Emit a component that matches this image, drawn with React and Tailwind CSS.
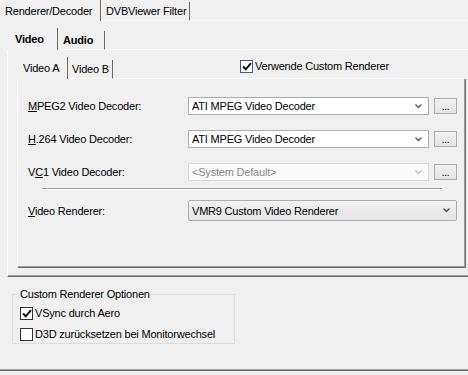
import React from "react";

// Windows-Dialog: Renderer/Decoder Einstellungen

const DARK = "border-r-[#696969]";

function Chevron({ disabled = false }) {
  return (
    <svg width="7" height="5" viewBox="0 0 7 5" className="shrink-0">
      <path
        d="M0.5 0.5 L3.5 3.5 L6.5 0.5"
        fill="none"
        stroke={disabled ? "#c4c4c4" : "#5a5a5a"}
        strokeWidth="1.4"
      />
    </svg>
  );
}

function Check({ checked, focus = false }) {
  return (
    <span
      className={`flex h-[13px] w-[13px] shrink-0 items-center justify-center border bg-white ${
        focus ? "border-[#3d5a8c]" : "border-[#333333]"
      }`}
    >
      {checked && (
        <svg width="10" height="9" viewBox="0 0 10 9">
          <path d="M1 4.5 L3.8 7.3 L9 1.2" fill="none" stroke="#111" strokeWidth="2" />
        </svg>
      )}
    </span>
  );
}

function Combo({ value, width = "w-[241px]", disabled = false }) {
  return (
    <div
      className={`flex h-[18px] ${width} items-center border pl-[3px] pr-[6px] ${
        disabled ? "border-[#d9d9d9] bg-[#fafafa] text-[#8a8a8a]" : "border-[#abadb3] bg-white"
      }`}
    >
      <span className="flex-1 whitespace-nowrap">{value}</span>
      <Chevron disabled={disabled} />
    </div>
  );
}

function DotsButton() {
  return (
    <div className="flex h-[16px] w-[23px] items-end justify-center border border-[#acacac] bg-gradient-to-b from-[#f2f2f2] to-[#e3e3e3] pb-[1px] text-[10px] leading-none">
      ...
    </div>
  );
}

function Row({ label, value, disabled }) {
  return (
    <div className="flex items-center">
      <div className="w-[160px] whitespace-nowrap">{label}</div>
      <Combo value={value} disabled={disabled} />
      <div className="ml-[5px]">
        <DotsButton />
      </div>
    </div>
  );
}

export default function App() {
  return (
    <div className="h-[375px] w-[468px] overflow-hidden whitespace-nowrap bg-[#f0f0f0] font-['Liberation_Sans',Arial,sans-serif] text-[11px] leading-[14px] tracking-[-0.2px] text-black">
      {/* oberste Registerleiste */}
      <div className="flex h-[21px] items-end">
        <div className={`flex h-[21px] w-[101px] items-center border-r ${DARK} pl-[5px]`}>
          Renderer/Decoder
        </div>
        <div className={`flex h-[19px] w-[89px] items-center border-b border-b-white border-r ${DARK} pl-[5px]`}>
          DVBViewer Filter
        </div>
        <div className="h-px flex-1 bg-white" />
      </div>

      <div className="h-[350px] border-b border-b-[#696969] pl-[7px] pt-[7px] shadow-[inset_0_-1px_0_#a0a0a0]">
        {/* Video / Audio */}
        <div className="flex h-[22px] items-end">
          <div className={`flex h-[22px] w-[51px] items-center border-r ${DARK} pl-[8px] font-bold`}>
            Video
          </div>
          <div className={`flex h-[19px] w-[47px] items-center border-b border-b-white border-r ${DARK} pl-[5px] font-bold`}>
            Audio
          </div>
          <div className="h-px flex-1 bg-white" />
        </div>

        <div className="h-[227px] border-b border-l border-b-[#696969] border-l-white pl-[9px] pt-[7px] shadow-[inset_0_-1px_0_#a0a0a0]">
          {/* Video A / Video B */}
          <div className="flex h-[22px] w-[449px] items-end">
            <div className={`flex h-[22px] w-[51px] items-center border-r ${DARK} pl-[6px]`}>
              Video A
            </div>
            <div className={`flex h-[19px] w-[45px] items-center border-b border-b-white border-r ${DARK} pl-[4px]`}>
              Video B
            </div>
            <div className="flex h-[22px] flex-1 items-start border-b border-b-white pl-[127px] pt-[2px]">
              <div className="flex items-center gap-[2px]">
                <Check checked focus />
                <span>Verwende Custom Renderer</span>
              </div>
            </div>
          </div>

          <div className="h-[189px] w-[449px] border-b border-l border-r border-b-[#696969] border-l-white border-r-[#696969] pl-[10px] pt-[18px] shadow-[inset_-1px_-1px_0_#a0a0a0]">
            <div className="flex flex-col gap-[15px]">
              <Row
                label={
                  <>
                    <u>M</u>PEG2 Video Decoder:
                  </>
                }
                value="ATI MPEG Video Decoder"
              />
              <Row
                label={
                  <>
                    <u>H</u>.264 Video Decoder:
                  </>
                }
                value="ATI MPEG Video Decoder"
              />
              <Row
                label={
                  <>
                    V<u>C</u>1 Video Decoder:
                  </>
                }
                value="<System Default>"
                disabled
              />
            </div>
            <div className="ml-[14px] mt-[7px] h-[2px] w-[400px] border-b border-t border-b-white border-t-[#a0a0a0]" />
            <div className="mt-[10px] flex items-center">
              <div className="w-[160px]">
                <u>V</u>ideo Renderer:
              </div>
              <div className="flex h-[21px] w-[269px] items-center rounded-[2px] border border-[#acacac] bg-gradient-to-b from-[#f2f2f2] to-[#e5e5e5] pl-[3px] pr-[6px]">
                <span className="flex-1">VMR9 Custom Video Renderer</span>
                <Chevron />
              </div>
            </div>
          </div>
        </div>

        {/* Gruppe */}
        <fieldset className="ml-[5px] mt-[10px] h-[57px] w-[223px] border border-[#dcdcdc] pl-[7px]">
          <legend className="leading-[14px]">Custom Renderer Optionen</legend>
          <div className="mt-[5px] flex flex-col gap-[7px]">
            <div className="flex items-center gap-[2px]">
              <Check checked />
              <span>VSync durch Aero</span>
            </div>
            <div className="flex items-center gap-[2px]">
              <Check checked={false} />
              <span>D3D zurücksetzen bei Monitorwechsel</span>
            </div>
          </div>
        </fieldset>
      </div>
    </div>
  );
}
